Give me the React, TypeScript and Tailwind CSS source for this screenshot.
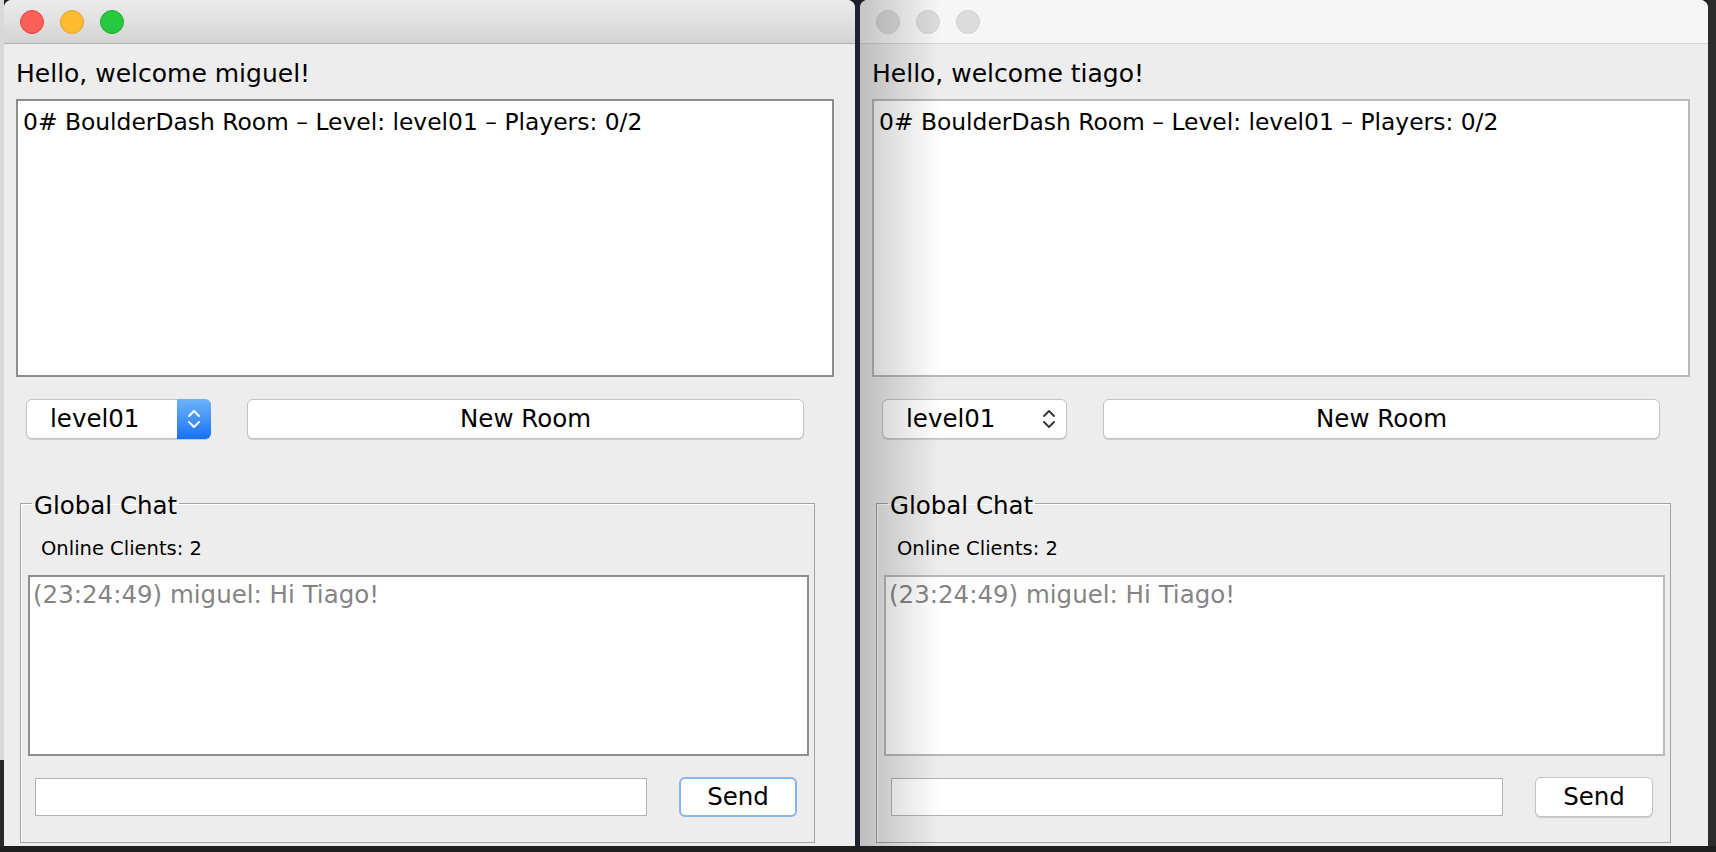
import React from "react";

const font = "font-['DejaVu_Sans',sans-serif]";

function Lights({ active }: { active: boolean }) {
  const cls = active
    ? ["bg-[#fe5f57] border-[#e2463f]", "bg-[#febc2e] border-[#e0a428]", "bg-[#28c840] border-[#1eac2c]"]
    : ["bg-[#dcdcdc] border-[#d0d0d0]", "bg-[#dcdcdc] border-[#d0d0d0]", "bg-[#dcdcdc] border-[#d0d0d0]"];
  return (
    <div className="flex gap-[16px] pl-[16px] pt-[10px]">
      {cls.map((c, i) => (
        <span key={i} className={`h-[24px] w-[24px] rounded-full border ${c}`} />
      ))}
    </div>
  );
}

function Chevrons({ color }: { color: string }) {
  return (
    <svg width="16" height="24" viewBox="0 0 16 24" fill="none" stroke={color} strokeWidth="2" strokeLinecap="round" strokeLinejoin="round">
      <polyline points="3,9 8,4 13,9" />
      <polyline points="3,15 8,20 13,15" />
    </svg>
  );
}

function Window({ name, active, className }: { name: string; active: boolean; className: string }) {
  const boxBorder = active ? "border-[#8e8e8e]" : "border-[#b9b9b9]";
  return (
    <div className={`relative flex h-[846px] shrink-0 flex-col overflow-hidden rounded-t-[8px] bg-[#ededed] text-black ${font} ${className}`}>
      {/* barra de título */}
      <div
        className={
          active
            ? "h-[44px] shrink-0 border-b border-[#b3b3b3] bg-gradient-to-b from-[#ececec] to-[#d4d4d4]"
            : "h-[44px] shrink-0 border-b border-[#d6d6d6] bg-[#f6f6f6]"
        }
      >
        <Lights active={active} />
      </div>

      <div className="flex flex-col pl-[12px] pr-[21px] pt-[15px]">
        <p className="text-[25px] leading-[30px]">Hello, welcome {name}!</p>

        {/* lista de salas */}
        <div className={`mt-[10px] h-[278px] w-[818px] border-2 bg-white px-[5px] pt-[6px] ${boxBorder}`}>
          <p className="text-[23.4px] leading-[30px]">0# BoulderDash Room – Level: level01 – Players: 0/2</p>
        </div>

        <div className="mt-[22px] flex items-center gap-[36px] pl-[10px]">
          <div className="flex h-[40px] w-[185px] items-stretch rounded-[6px] border border-[#c4c4c4] bg-white shadow-[0_1px_1px_rgba(0,0,0,0.15)]">
            <span className="flex-1 pl-[23px] text-[24.5px] leading-[38px]">level01</span>
            {active ? (
              <span className="-my-px -mr-px flex w-[34px] items-center justify-center rounded-r-[6px] bg-gradient-to-b from-[#6db3fb] to-[#1270f2]">
                <Chevrons color="#ffffff" />
              </span>
            ) : (
              <span className="flex w-[34px] items-center justify-center">
                <Chevrons color="#3a3a3a" />
              </span>
            )}
          </div>
          <button className="h-[40px] w-[557px] rounded-[6px] border border-[#c4c4c4] bg-white text-[24.5px] leading-[38px] shadow-[0_1px_1px_rgba(0,0,0,0.15)]">
            New Room
          </button>
        </div>

        {/* chat global */}
        <fieldset className="mt-[46px] ml-[4px] w-[795px] border border-[#a3a3a3] pb-[25px] pl-[7px] pr-[4px] shadow-[inset_1px_1px_0_#ffffff]">
          <legend className="ml-[4px] px-[2px] pt-[6px] text-[24.5px] leading-[30px]">Global Chat</legend>
          <p className="ml-[13px] mt-[16px] text-[19.5px] leading-[24px]">Online Clients: 2</p>
          <div className={`mt-[14px] h-[181px] w-[781px] border-2 bg-white pl-[3px] pt-[3px] ${boxBorder}`}>
            <p className="text-[24.5px] leading-[30px] text-[#858585]">(23:24:49) miguel: Hi Tiago!</p>
          </div>
          <div className="mt-[21px] flex items-center gap-[32px] pl-[7px]">
            <div className="h-[38px] w-[612px] border border-[#b3b3b3] bg-white" />
            <button
              className={
                active
                  ? "h-[40px] w-[118px] rounded-[6px] border-2 border-[#86b6f0] bg-white text-[24.5px] leading-[36px]"
                  : "h-[40px] w-[118px] rounded-[6px] border border-[#c4c4c4] bg-white text-[24.5px] leading-[38px] shadow-[0_1px_1px_rgba(0,0,0,0.15)]"
              }
            >
              Send
            </button>
          </div>
        </fieldset>
      </div>

      {/* sombra da janela da frente */}
      {!active && (
        <div className="pointer-events-none absolute inset-y-0 left-0 w-[80px] bg-gradient-to-r from-black/20 to-transparent" />
      )}
    </div>
  );
}

export default function App() {
  return (
    <div className="flex h-[852px] w-[1716px] flex-col overflow-hidden bg-[#1f1f1f]">
      <div className="flex h-[846px] shrink-0">
        <div className="flex w-[4px] shrink-0 flex-col">
          <div className="h-[760px] bg-[#d9d9d9]" />
          <div className="flex-1 bg-[#2a2a2a]" />
        </div>
        <Window name="miguel" active className="w-[851px]" />
        <div className="w-[5px] shrink-0 bg-[#1b2232]" />
        <Window name="tiago" active={false} className="w-[848px]" />
        <div className="flex-1 bg-[#2c2c2c]" />
      </div>
    </div>
  );
}
